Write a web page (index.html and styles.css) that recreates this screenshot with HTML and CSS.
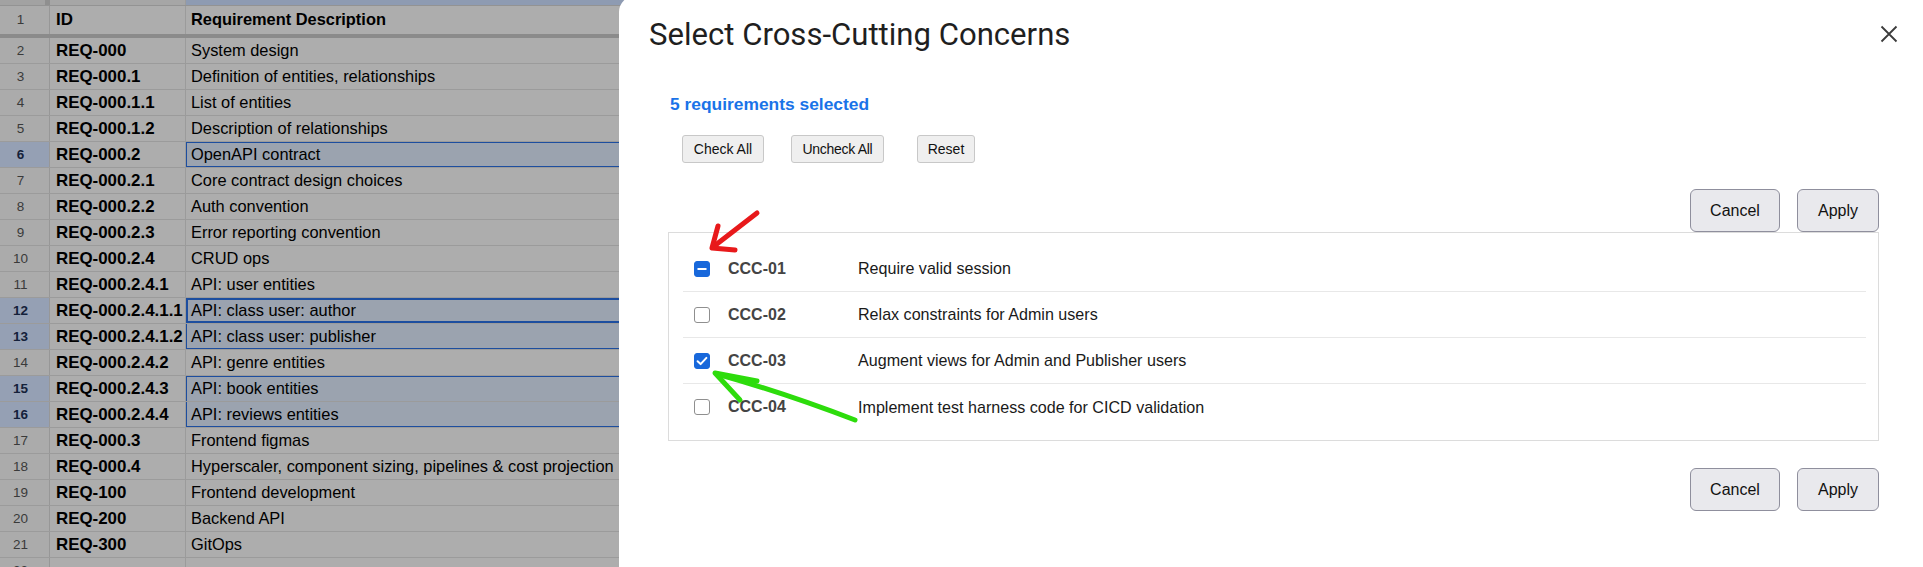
FILE: index.html
```html
<!DOCTYPE html>
<html>
<head>
<meta charset="utf-8">
<title>Select Cross-Cutting Concerns</title>
<link rel="stylesheet" href="styles.css">
</head>
<body>
<div class="screen">
  <div class="sheet">
    <div class="row colhdr"><div class="rn"></div><div class="id"></div><div class="desc hl"></div></div>
    <div class="row hdr"><div class="rn">1</div><div class="id">ID</div><div class="desc b">Requirement Description</div></div>
    <div class="row"><div class="rn">2</div><div class="id">REQ-000</div><div class="desc">System design</div></div>
    <div class="row"><div class="rn">3</div><div class="id">REQ-000.1</div><div class="desc">Definition of entities, relationships</div></div>
    <div class="row"><div class="rn">4</div><div class="id">REQ-000.1.1</div><div class="desc">List of entities</div></div>
    <div class="row"><div class="rn">5</div><div class="id">REQ-000.1.2</div><div class="desc">Description of relationships</div></div>
    <div class="row"><div class="rn sel">6</div><div class="id">REQ-000.2</div><div class="desc sel box">OpenAPI contract</div></div>
    <div class="row"><div class="rn">7</div><div class="id">REQ-000.2.1</div><div class="desc">Core contract design choices</div></div>
    <div class="row"><div class="rn">8</div><div class="id">REQ-000.2.2</div><div class="desc">Auth convention</div></div>
    <div class="row"><div class="rn">9</div><div class="id">REQ-000.2.3</div><div class="desc">Error reporting convention</div></div>
    <div class="row"><div class="rn">10</div><div class="id">REQ-000.2.4</div><div class="desc">CRUD ops</div></div>
    <div class="row"><div class="rn">11</div><div class="id">REQ-000.2.4.1</div><div class="desc">API: user entities</div></div>
    <div class="row"><div class="rn sel">12</div><div class="id">REQ-000.2.4.1.1</div><div class="desc sel box2">API: class user: author</div></div>
    <div class="row"><div class="rn sel">13</div><div class="id">REQ-000.2.4.1.2</div><div class="desc sel boxb">API: class user: publisher</div></div>
    <div class="row"><div class="rn">14</div><div class="id">REQ-000.2.4.2</div><div class="desc">API: genre entities</div></div>
    <div class="row"><div class="rn sel">15</div><div class="id">REQ-000.2.4.3</div><div class="desc sel boxt">API: book entities</div></div>
    <div class="row"><div class="rn sel">16</div><div class="id">REQ-000.2.4.4</div><div class="desc sel boxb">API: reviews entities</div></div>
    <div class="row"><div class="rn">17</div><div class="id">REQ-000.3</div><div class="desc">Frontend figmas</div></div>
    <div class="row"><div class="rn">18</div><div class="id">REQ-000.4</div><div class="desc">Hyperscaler, component sizing, pipelines &amp; cost projection</div></div>
    <div class="row"><div class="rn">19</div><div class="id">REQ-100</div><div class="desc">Frontend development</div></div>
    <div class="row"><div class="rn">20</div><div class="id">REQ-200</div><div class="desc">Backend API</div></div>
    <div class="row"><div class="rn">21</div><div class="id">REQ-300</div><div class="desc">GitOps</div></div>
    <div class="row"><div class="rn">22</div><div class="id"></div><div class="desc"></div></div>
  </div>

  <div class="dialog">
    <div class="dlg-head">
      <h1 class="title">Select Cross-Cutting Concerns</h1>
      <button class="close" aria-label="Close">
        <svg width="18" height="18" viewBox="0 0 18 18"><path d="M1.5 1.5 L16.5 16.5 M16.5 1.5 L1.5 16.5" stroke="#3c3c3c" stroke-width="1.8" fill="none"/></svg>
      </button>
    </div>
    <div class="dlg-body">
      <div class="status">5 requirements selected</div>
      <div class="tools">
        <button class="tbtn check">Check All</button>
        <button class="tbtn uncheck">Uncheck All</button>
        <button class="tbtn reset">Reset</button>
      </div>
      <div class="actions top">
        <button class="abtn cancel">Cancel</button>
        <button class="abtn apply">Apply</button>
      </div>
      <div class="list">
        <div class="item">
          <span class="cb on"><svg width="16" height="16" viewBox="0 0 16 16"><path d="M3.5 8 H12.5" stroke="#fff" stroke-width="2" fill="none"/></svg></span>
          <span class="code">CCC-01</span><span class="text">Require valid session</span>
        </div>
        <div class="item">
          <span class="cb"></span>
          <span class="code">CCC-02</span><span class="text">Relax constraints for Admin users</span>
        </div>
        <div class="item">
          <span class="cb on"><svg width="16" height="16" viewBox="0 0 16 16"><path d="M3.6 8.3 L6.6 11.1 L12.4 4.9" stroke="#fff" stroke-width="2" fill="none" stroke-linecap="round" stroke-linejoin="round"/></svg></span>
          <span class="code">CCC-03</span><span class="text">Augment views for Admin and Publisher users</span>
        </div>
        <div class="item">
          <span class="cb"></span>
          <span class="code">CCC-04</span><span class="text">Implement test harness code for CICD validation</span>
        </div>
      </div>
      <div class="actions bottom">
        <button class="abtn cancel">Cancel</button>
        <button class="abtn apply">Apply</button>
      </div>
    </div>
  </div>

  <svg class="annot" width="1923" height="567" viewBox="0 0 1923 567">
    <path d="M757 213 Q735 230 713 247" stroke="#e8191b" stroke-width="5" fill="none" stroke-linecap="round"/>
    <path d="M718 226 L712 248 L735 250" stroke="#e8191b" stroke-width="5" fill="none" stroke-linecap="round" stroke-linejoin="round"/>
    <path d="M855 420 Q785 393 717 374" stroke="#2ddc0c" stroke-width="5" fill="none" stroke-linecap="round"/>
    <path d="M757 381 L715 373 L740 400" stroke="#2ddc0c" stroke-width="5" fill="none" stroke-linecap="round" stroke-linejoin="round"/>
  </svg>
</div>
</body>
</html>
```

FILE: styles.css
```css
* { box-sizing: border-box; }
html, body {
  margin: 0;
  padding: 0;
  width: 1923px;
  height: 567px;
  overflow: hidden;
  background: #adadad;
}
.screen {
  position: relative;
  width: 1923px;
  height: 567px;
  overflow: hidden;
  font-family: "Liberation Sans", Arial, sans-serif;
  color: #000;
}

/* ---------- spreadsheet (dimmed) ---------- */
.sheet { width: 100%; }
.row {
  display: grid;
  grid-template-columns: 50px 136px 1fr;
  height: 26px;
  border-bottom: 1px solid #9b9b9b;
  background: #adadad;
}
.row > div { white-space: nowrap; overflow: hidden; }
.rn {
  border-right: 1px solid #979797;
  text-align: center;
  padding-right: 8px;
  font-size: 13.5px;
  line-height: 25px;
  color: #3a3a3a;
  background: #ababab;
}
.rn.sel { background: #95a0b4; color: #14213a; font-weight: bold; }
.id {
  border-right: 1px solid #9b9b9b;
  padding-left: 6px;
  font-size: 16.9px;
  font-weight: bold;
  line-height: 25px;
}
.desc {
  padding-left: 5px;
  font-size: 16.4px;
  line-height: 25px;
}
.desc.b { font-weight: bold; font-size: 16.4px; }
.desc.sel { background: #9ba3af; }
.desc.box { box-shadow: inset 0 0 0 1px #1d4e9f; }
.desc.box2 { box-shadow: inset 0 0 0 2px #1d4e9f; }
.desc.boxt { box-shadow: inset 1px 0 0 #1d4e9f, inset 0 1px 0 #1d4e9f; }
.desc.boxb { box-shadow: inset 1px 0 0 #1d4e9f, inset 0 -1px 0 #1d4e9f; }

.row.colhdr { height: 6px; border-bottom: 1px solid #939393; }
.row.colhdr .rn { background: #a2a2a2; border-right: 5px solid #8f8f8f; }
.row.colhdr .id { background: #a6a6a6; }
.row.colhdr .desc.hl { background: #8e9bb2; }
.row.hdr { height: 32px; border-bottom: 4px solid #8b8b8b; }
.row.hdr > div { line-height: 27px; }

/* ---------- dialog ---------- */
.dialog {
  position: absolute;
  left: 619px;
  top: -4px;
  right: 0;
  bottom: 0;
  background: #fff;
  border-top-left-radius: 16px;
  display: flex;
  flex-direction: column;
}
.dlg-head {
  height: 76px;
  display: flex;
  align-items: center;
  justify-content: space-between;
  padding: 0 25px 0 30px;
}
.title {
  margin: 0;
  font-family: Roboto, "Open Sans", sans-serif;
  font-weight: 400;
  font-size: 31.1px;
  color: #1f1f1f;
}
.close {
  border: 0;
  background: transparent;
  padding: 0;
  width: 18px;
  height: 18px;
  display: flex;
}
.dlg-body {
  padding: 0 44px 0 49px;
  display: flex;
  flex-direction: column;
}
.status {
  margin: 22px 0 0 2px;
  font-size: 17.4px;
  line-height: 20px;
  font-weight: bold;
  color: #1a73e8;
}
.tools {
  margin: 21px 0 0 14px;
  display: flex;
}
.tbtn {
  height: 28px;
  padding: 0;
  font-family: "Liberation Sans", Arial, sans-serif;
  font-size: 14px;
  color: #111;
  background: #efefef;
  border: 1px solid #c8c8c8;
  border-radius: 3px;
}
.tbtn.check { width: 82px; }
.tbtn.uncheck { width: 93px; margin-left: 27px; letter-spacing: -0.3px; }
.tbtn.reset { width: 58px; margin-left: 33px; }
.actions {
  display: flex;
  justify-content: flex-end;
  gap: 17px;
}
.actions.top { margin-top: 26px; }
.actions.bottom { margin-top: 27px; }
.abtn {
  height: 43px;
  font-family: "Liberation Sans", Arial, sans-serif;
  font-size: 16px;
  color: #111;
  background: #e9e9ed;
  border: 1px solid #8f8f9d;
  border-radius: 6px;
  padding: 0;
}
.abtn.cancel { width: 90px; }
.abtn.apply { width: 82px; }

.list {
  border: 1px solid #dcdcdc;
  padding: 13px 12px 10px 14px;
}
.item {
  display: flex;
  align-items: center;
  height: 46px;
  border-bottom: 1px solid #e8e8e8;
}
.item:last-child { border-bottom: 0; }
.cb {
  flex: none;
  width: 16px;
  height: 16px;
  margin-left: 11px;
  margin-right: 18px;
  border: 1.5px solid #8f8f8f;
  border-radius: 3px;
  background: #fff;
  display: flex;
  align-items: center;
  justify-content: center;
}
.cb.on { background: #1868db; border-color: #1868db; }
.cb svg { flex: none; }
.code {
  width: 130px;
  font-size: 16px;
  font-weight: bold;
  color: #444;
}
.text {
  font-size: 16.1px;
  color: #1a1a1a;
}

/* ---------- hand-drawn annotations ---------- */
.annot {
  position: absolute;
  left: 0;
  top: 0;
  pointer-events: none;
}
```
